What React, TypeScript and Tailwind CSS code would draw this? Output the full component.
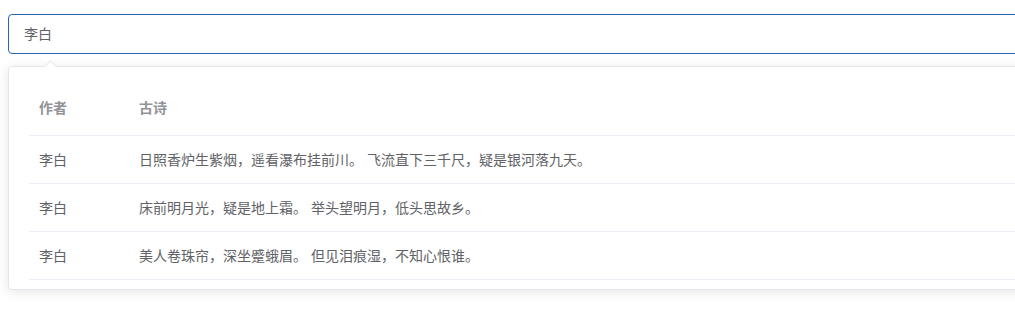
const poems = [
  "日照香炉生紫烟，遥看瀑布挂前川。 飞流直下三千尺，疑是银河落九天。",
  "床前明月光，疑是地上霜。 举头望明月，低头思故乡。",
  "美人卷珠帘，深坐蹙蛾眉。 但见泪痕湿，不知心恨谁。",
];

export default function App() {
  return (
    <div
      className="w-full h-[318px] overflow-hidden bg-white text-[14px] text-[#606266]"
      style={{ fontFamily: '"Liberation Sans", "Noto Sans CJK SC", sans-serif' }}
    >
      <div className="w-[1060px] pl-2 pt-[14px]">
        {/* Search input */}
        <div className="h-10 border border-[#2d63b7] rounded-[4px] flex items-center pl-[15px]">
          <span className="leading-5">李白</span>
        </div>

        {/* Dropdown */}
        <div className="relative mt-3 bg-white border border-[#e4e7ed] rounded-[4px] shadow-[0_2px_12px_rgba(0,0,0,0.1)] px-5 pt-[31px] pb-[9px]">
          <div className="absolute left-[37px] -top-[5px] w-[9px] h-[9px] rotate-45 bg-white border-l border-t border-[#e4e7ed]"></div>
          <div className="flex border-b border-[#ebeef5] pb-[17px] font-bold text-[#909399] leading-5">
            <div className="w-[110px] pl-[10px]">作者</div>
            <div>古诗</div>
          </div>
          {poems.map((p, i) => (
            <div key={i} className="flex items-center h-12 border-b border-[#ebeef5] leading-5">
              <div className="w-[110px] pl-[10px]">李白</div>
              <div>{p}</div>
            </div>
          ))}
        </div>
      </div>
    </div>
  );
}
